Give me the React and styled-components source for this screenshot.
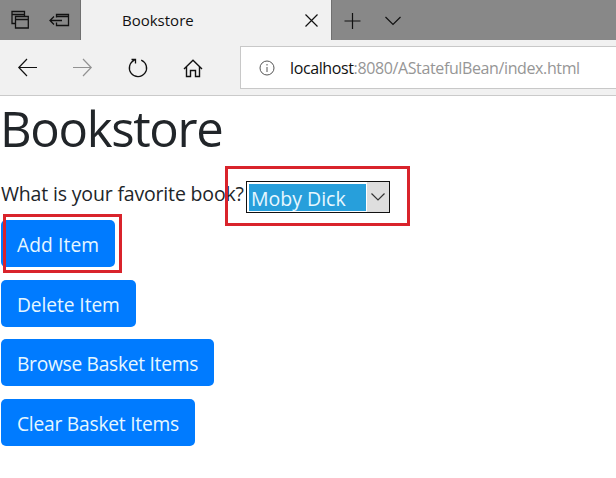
import React from "react";
import styled, { createGlobalStyle } from "styled-components";

const GlobalStyle = createGlobalStyle`
  * { box-sizing: border-box; }
  body {
    margin: 0;
    background: #fff;
    color: #212529;
    font-family: "Open Sans", "Noto Sans", sans-serif;
    overflow: hidden;
  }
`;

const Window = styled.div`
  width: 616px;
  height: 478px;
  overflow: hidden;
`;

const TabBar = styled.header`
  display: flex;
  height: 40px;
  background: #888;
`;

const WindowTools = styled.div`
  display: flex;
  width: 81px;
  padding: 10px 0 0 10px;
  gap: 20px;
  border-right: 1px solid #707070;
`;

const Tab = styled.div`
  display: flex;
  align-items: center;
  justify-content: space-between;
  width: 250px;
  padding: 0 12px 0 41px;
  background: #f1f1f1;
`;

const Label = styled.span`
  font-size: ${(p) => p.$size}px;
  letter-spacing: ${(p) => p.$track || 0}px;
  line-height: 20px;
  white-space: nowrap;
  color: ${(p) => p.$color || "inherit"};
`;

const Host = styled.span`
  color: #111;
`;

const TabActions = styled.div`
  display: flex;
  flex: 1;
  gap: 22px;
  padding: 12px 0 0 12px;
  border-left: 1px solid #707070;
`;

const NavBar = styled.nav`
  display: flex;
  height: 56px;
  background: #f1f1f1;
  border-bottom: 1px solid #cacaca;
`;

const NavIcons = styled.div`
  display: flex;
  width: 240px;
  padding: 17px 0 0 17px;
  gap: 33px;
`;

const AddressField = styled.div`
  display: flex;
  align-items: center;
  flex: 1;
  height: 43px;
  margin-top: 6px;
  padding-left: 18px;
  gap: 15px;
  background: #fff;
  border: 1px solid #c8c8c8;
  border-right: 0;
`;

const Glyph = styled.svg`
  display: block;
  flex: none;
  fill: none;
  stroke: ${(p) => p.$color || "#111"};
  stroke-width: ${(p) => p.$weight || 1.2};
`;

const Content = styled.main`
  padding-left: 1px;
`;

const Title = styled.h1`
  margin: 0 0 0 -1px;
  height: 72px;
  padding-top: 2px;
  font-size: 49px;
  font-weight: 400;
  line-height: 60px;
  letter-spacing: -1.3px;
`;

const Question = styled.div`
  display: flex;
  height: 52px;
  padding-top: 13px;
`;

const Prompt = styled.label`
  width: 245px;
  padding-top: 3px;
  line-height: 20px;
  font-size: 19.5px;
  letter-spacing: -0.17px;
  white-space: nowrap;
`;

const Highlight = styled.div`
  position: absolute;
  border: 3px solid #d9232b;
  pointer-events: none;
  left: ${(p) => p.$x}px;
  top: ${(p) => p.$y}px;
  width: ${(p) => p.$w}px;
  height: ${(p) => p.$h}px;
`;

const Select = styled.div`
  display: flex;
  width: 144px;
  height: 32px;
  border: 1px solid #111;
  background: #dedede;
`;

const Selected = styled.div`
  width: 120px;
  padding: 5px 0 0 2px;
  border: 1px solid #fff;
  border-width: 2px 1px 1px 2px;
  background: #279fdb;
  color: #e8f8ff;
`;

const Arrow = styled.div`
  display: flex;
  flex: 1;
  align-items: center;
  justify-content: center;
`;

const Actions = styled.div`
  display: flex;
  flex-direction: column;
  align-items: flex-start;
  gap: 12.5px;
`;

const Button = styled.button`
  width: ${(p) => p.$width}px;
  height: 47px;
  padding: 3px 0 0 16px;
  border: 0;
  border-radius: 5px;
  background: #007bff;
  color: #e6f7ff;
  font-family: inherit;
  font-size: 19.2px;
  line-height: 20px;
  letter-spacing: ${(p) => p.$track}px;
  text-align: left;
  white-space: nowrap;
`;

const actions = [
  { label: "Add Item", width: 114, track: 0.1 },
  { label: "Delete Item", width: 135, track: -0.08 },
  { label: "Browse Basket Items", width: 213, track: -0.28 },
  { label: "Clear Basket Items", width: 194, track: -0.22 },
];

export default function App() {
  return (
    <Window>
      <GlobalStyle />
      <TabBar>
        <WindowTools>
          <Glyph width="19" height="20" $weight="1.3">
            <path d="M5.5 13.5H2V1.5H14.5V6M2 4.5H14.5M5.5 6.5H18.3V18H5.5ZM5.5 9.5H18.3" />
          </Glyph>
          <Glyph width="22" height="20" $weight="1.3">
            <path d="M7.5 7.5V4.5H19.5V15.5H7.5V12.5M7.5 6.5H19.5M1 10.5H13M5 6.5L1 10.5L5 14.5" />
          </Glyph>
        </WindowTools>
        <Tab>
          <Label $size={15} $color="#111">Bookstore</Label>
          <Glyph width="15" height="15"><path d="M1.5 1.5L13.5 13.5M13.5 1.5L1.5 13.5" /></Glyph>
        </Tab>
        <TabActions>
          <Glyph width="18" height="18"><path d="M.5 9H16.5M8.5 1V17" /></Glyph>
          <Glyph width="18" height="18"><path d="M1.5 5L9 12.5L16.5 5" /></Glyph>
        </TabActions>
      </TabBar>
      <NavBar>
        <NavIcons>
          <Glyph width="22" height="22"><path d="M20 10.5H2M10 2L1.8 10.5L10 19" /></Glyph>
          <Glyph width="22" height="22" $color="#929292"><path d="M1 10.5H19M11 2L19.2 10.5L11 19" /></Glyph>
          <Glyph width="22" height="22" $weight="1.3"><path d="M14.2 3.1A8.6 8.6 0 1 1 7.5 3.2M4.5 2.5H8.5V6.5" /></Glyph>
          <Glyph width="22" height="22" $weight="1.4"><path d="M2 12L11 3.2L20 12M4.5 10V19.5H8.5V13.5H13.5V19.5H17.5V10" /></Glyph>
        </NavIcons>
        <AddressField>
          <Glyph width="16" height="16" $color="#555" $weight="1">
            <circle cx="8" cy="8" r="7" /><path d="M8 7V12M8 4V5.5" />
          </Glyph>
          <Label $size={16} $color="#969696" $track={-0.38}>
            <Host>localhost</Host>:8080/AStatefulBean/index.html
          </Label>
        </AddressField>
      </NavBar>
      <Content>
        <Title>Bookstore</Title>
        <Question>
          <Prompt>What is your favorite book?</Prompt>
          <Select>
            <Selected><Label as="div" $size={19.5} $track={0}>Moby Dick</Label></Selected>
            <Arrow>
              <Glyph width="16" height="12" $color="#333"><path d="M1.5 2.5L8 9L14.5 2.5" /></Glyph>
            </Arrow>
          </Select>
        </Question>
        <Actions>
          {actions.map((a) => (
            <Button key={a.label} $width={a.width} $track={a.track}>{a.label}</Button>
          ))}
        </Actions>
      </Content>
      <Highlight $x={225} $y={166} $w={185} $h={60} />
      <Highlight $x={3} $y={214} $w={119} $h={59} />
    </Window>
  );
}
